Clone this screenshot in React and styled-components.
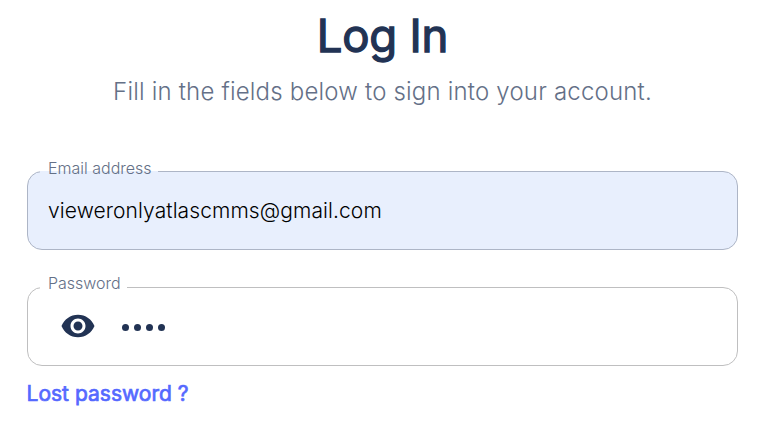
import React from "react";
import styled, { createGlobalStyle } from "styled-components";
import { MdVisibility } from "react-icons/md";

const GlobalStyle = createGlobalStyle`
  * { box-sizing: border-box; }
  body { margin: 0; background: #fff; font-family: Inter, sans-serif; }
`;
const Page = styled.main`
  height: 426px;
  padding: 8px 28px 0 27px;
  overflow: hidden;
`;
const Title = styled.h1`
  margin: 0;
  height: 56px;
  line-height: 56px;
  text-align: center;
  font-size: 45.5px;
  font-weight: 400;
  letter-spacing: -0.2px;
  -webkit-text-stroke: 1.3px #223354;
  color: #223354;
`;
const Subtitle = styled.p`
  margin: 10px 0 61px;
  height: 36px;
  line-height: 36px;
  text-align: center;
  font-size: 24px;
  font-weight: 300;
  letter-spacing: 0.19px;
  color: #647087;
  white-space: nowrap;
`;
const Field = styled.div`
  position: relative;
  display: flex;
  align-items: center;
  height: 79px;
  margin-bottom: ${(p) => p.$gap || 0}px;
  padding: 0 20px;
  border: 1px solid ${(p) => (p.$filled ? "#adb5c6" : "#bfbfc0")};
  border-radius: 15px;
  background: ${(p) => (p.$filled ? "#e8effd" : "#fff")};
`;
const Label = styled.label`
  position: absolute;
  top: ${(p) => (p.$filled ? -14 : -15)}px;
  left: 12px;
  padding: 0 6px 0 8px;
  height: 20px;
  line-height: 20px;
  font-size: 16px;
  font-weight: 300;
  color: #647087;
  background: ${(p) =>
    p.$filled
      ? "linear-gradient(#fff 13px, #e8effd 13px)"
      : "#fff"};
`;
const Value = styled.span`
  font-size: 21px;
  font-weight: 350;
  letter-spacing: 0.09px;
  color: #000;
`;
const Eye = styled(MdVisibility)`
  width: 36px;
  height: 36px;
  margin: -1px 0 0 12px;
  color: #223354;
`;
const Dots = styled.div`
  display: flex;
  gap: 5px;
  margin: 2px 0 0 26px;
`;
const Dot = styled.i`
  width: 7px;
  height: 7px;
  border-radius: 50%;
  background: #223354;
`;
const LostLink = styled.a`
  display: block;
  margin: 14px 0 0 -0.5px;
  line-height: 28px;
  font-size: 21px;
  font-weight: 400;
  letter-spacing: 0.02px;
  -webkit-text-stroke: 0.7px #5569ff;
  color: #5569ff;
`;

export default function App() {
  return (
    <Page>
      <GlobalStyle />
      <Title>Log In</Title>
      <Subtitle>Fill in the fields below to sign into your account.</Subtitle>
      <Field $filled $gap={37}>
        <Label $filled>Email address</Label>
        <Value>vieweronlyatlascmms@gmail.com</Value>
      </Field>
      <Field>
        <Label>Password</Label>
        <Eye />
        <Dots><Dot /><Dot /><Dot /><Dot /></Dots>
      </Field>
      <LostLink>Lost password ?</LostLink>
    </Page>
  );
}
